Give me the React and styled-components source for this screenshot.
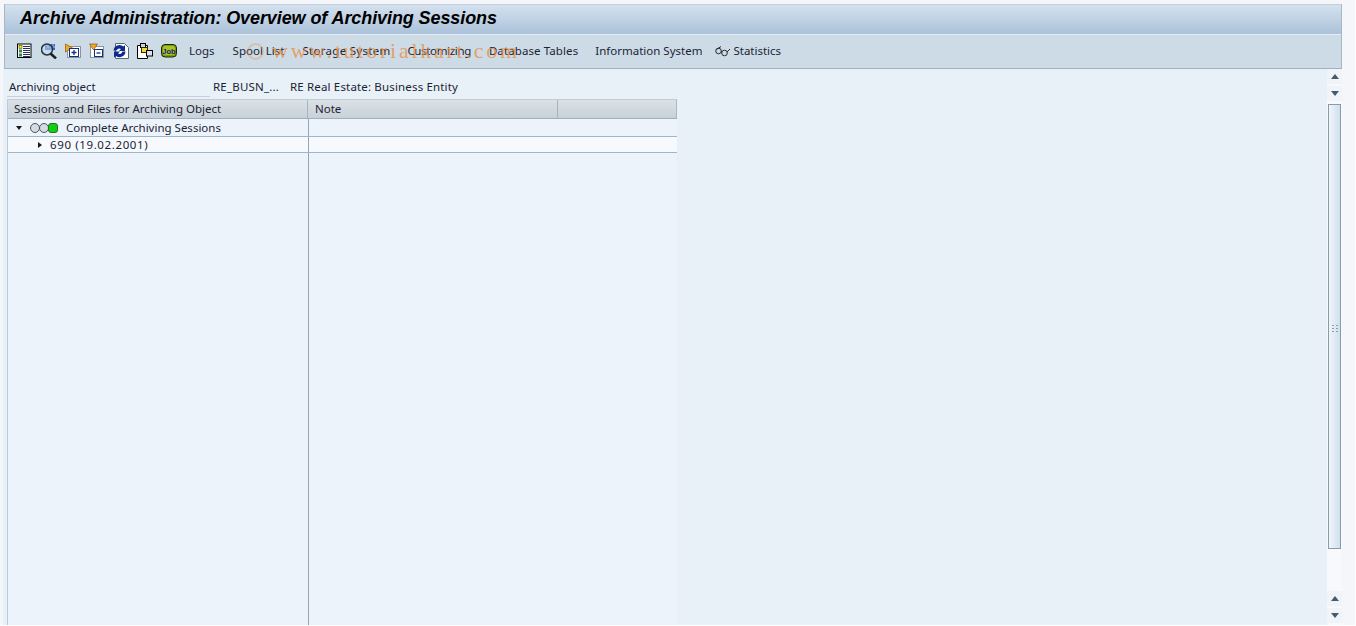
import React from "react";
import styled, { createGlobalStyle } from "styled-components";

const GlobalStyle = createGlobalStyle`
  html, body {
    margin: 0;
    padding: 0;
    background: #fff;
    overflow: hidden;
  }
  body {
    font-family: "Noto Sans", "Liberation Sans", sans-serif;
    font-size: 11.5px;
    color: #1c2433;
  }
`;

const Page = styled.div`
  position: relative;
  width: 1355px;
  height: 625px;
  box-sizing: border-box;
  padding: 4px 13px 0 3px;
  display: flex;
  flex-direction: column;
  overflow: hidden;
  background: #f5f6f9;
`;

const Header = styled.div`
  border: 1px solid #a9b6c6;
  border-bottom: 1px solid #9fb0c4;
  border-top-color: #c5cfdb;
  margin-left: 1px;
`;

const TitleBar = styled.div`
  height: 30px;
  box-sizing: border-box;
  padding: 0 0 2px 15px;
  display: flex;
  align-items: center;
  background: linear-gradient(#d4e1ee, #abc2da);
  border-bottom: 1px solid #e6edf4;
`;

const Title = styled.h1`
  margin: 0;
  font-family: "Liberation Sans", Arial, sans-serif;
  font-size: 18px;
  font-weight: bold;
  font-style: italic;
  color: #000;
  letter-spacing: -0.09px;
`;

const Toolbar = styled.div`
  height: 33px;
  box-sizing: border-box;
  padding: 0 0 2px 12px;
  display: flex;
  align-items: center;
  background: #cddbe7;
`;

const IconButton = styled.span`
  width: 16px;
  height: 16px;
  margin-right: 8px;
  display: inline-flex;
`;

const TextButton = styled.span`
  margin-left: ${(p) => p.$gap}px;
  letter-spacing: ${(p) => p.$spacing || 0}px;
  white-space: nowrap;
  display: inline-flex;
  align-items: center;
  gap: 2px;
`;

const Body = styled.div`
  flex: 1;
  display: flex;
  background: #e8f0f8;
  min-height: 0;
`;

const Content = styled.div`
  flex: 1;
  padding: 9px 0 0 4px;
  display: flex;
  flex-direction: column;
  min-height: 0;
`;

const FieldRow = styled.div`
  height: 21px;
  display: flex;
  align-items: flex-start;
  line-height: 18px;
`;

const FieldLabel = styled.span`
  width: 201px;
  padding-left: 2px;
  height: 18px;
  border-bottom: 1px solid #c5d0dc;
`;

const FieldValue = styled.span`
  width: 77px;
  margin-left: 3px;
  letter-spacing: 0.2px;
`;

const FieldText = styled.span`
  letter-spacing: 0.16px;
`;

const TreeTable = styled.div`
  flex: 1;
  width: 669px;
  display: flex;
  flex-direction: column;
  background: #ecf3fb;
  border-left: 1px solid #bccbdb;
  min-height: 0;
`;

const Columns = styled.div`
  display: grid;
  grid-template-columns: 300px 250px 118px;
  height: 20px;
  box-sizing: border-box;
  background: linear-gradient(#dbe1e6, #c8d1d9);
  border-top: 1px solid #c2ccd6;
  border-bottom: 1px solid #9fafbf;
  border-right: 1px solid #a9b6c6;
`;

const ColumnHead = styled.div`
  padding-left: ${(p) => p.$pad || 6}px;
  line-height: 18px;
  border-right: ${(p) => (p.$last ? "none" : "1px solid #a5b3c2")};
`;

const Row = styled.div`
  display: grid;
  grid-template-columns: 301px 1fr;
  height: ${(p) => p.$height}px;
  box-sizing: border-box;
  background: ${(p) => p.$bg};
  border-bottom: 1px solid #9fb6ca;
`;

const TreeCell = styled.div`
  display: flex;
  align-items: center;
  padding-left: ${(p) => p.$indent}px;
  border-right: 1px solid #93a5b8;
  white-space: nowrap;
`;

const SessionLabel = styled.span`
  letter-spacing: 0.62px;
`;

const EmptyCell = styled.div``;

const Filler = styled.div`
  flex: 1;
  display: grid;
  grid-template-columns: 301px 1fr;
`;

const Arrow = styled.span`
  width: 0;
  height: 0;
  border-style: solid;
  ${(p) =>
    p.$open
      ? "border-width: 4px 3.5px 0 3.5px; border-color: #1a1a1a transparent transparent;"
      : "border-width: 3.5px 0 3.5px 4px; border-color: transparent transparent transparent #1a1a1a; margin-right: 8px;"}
`;

const Lights = styled.span`
  display: inline-flex;
  margin: 0 8px 0 8px;
`;

const Light = styled.span`
  width: 10px;
  height: 10px;
  box-sizing: border-box;
  border-radius: ${(p) => (p.$on ? "3px" : "50%")};
  border: 1px solid ${(p) => (p.$on ? "#2d6b2d" : "#4a545e")};
  background: ${(p) => (p.$on ? "#10d010" : "#d4dbe2")};
  margin-left: ${(p) => (p.$first ? 0 : -1)}px;
`;

const Scrollbar = styled.div`
  width: 15px;
  margin-left: 1px;
  display: flex;
  flex-direction: column;
  background: #f7f9fc;
`;

const ScrollButton = styled.div`
  height: 15px;
  margin-bottom: 2px;
  background: #f0f4f9;
  display: flex;
  align-items: center;
  justify-content: center;
`;

const ScrollTriangle = styled.span`
  width: 0;
  height: 0;
  border-style: solid;
  ${(p) =>
    p.$up
      ? "border-width: 0 4.5px 5px 4.5px; border-color: transparent transparent #47596c;"
      : "border-width: 5px 4.5px 0 4.5px; border-color: #47596c transparent transparent;"}
`;

const ScrollThumb = styled.div`
  height: 445px;
  box-sizing: border-box;
  margin: 1px 1px 0;
  padding-top: 4px;
  border: 1px solid #8c9aa8;
  background: linear-gradient(90deg, #f0f5fa, #cfe0ee);
  display: flex;
  align-items: center;
  justify-content: center;
`;

const Grip = styled.span`
  width: 8px;
  height: 9px;
  background-image: radial-gradient(#8aa0b4 1px, transparent 1px);
  background-size: 4px 3px;
`;

const ScrollTrack = styled.div`
  flex: 1;
  background: #f7f9fc;
`;

const Watermark = styled.div`
  position: absolute;
  left: 272px;
  top: 38px;
  font-family: "Liberation Serif", serif;
  font-size: 22px;
  letter-spacing: 2.75px;
  color: rgba(232, 146, 72, 0.8);
  white-space: nowrap;
  pointer-events: none;
`;

const WatermarkRing = styled.div`
  position: absolute;
  left: 247px;
  top: 43px;
  width: 17px;
  height: 17px;
  box-sizing: border-box;
  border: 2px solid rgba(232, 146, 72, 0.35);
  border-radius: 50%;
  pointer-events: none;
`;

const DetailIcon = () => (
  <svg width="16" height="16" viewBox="0 0 16 16">
    <rect x="0.5" y="1" width="13.5" height="13.5" fill="#fff" stroke="#000" />
    <rect x="2" y="2.500" width="3" height="3" fill="#f6e000" stroke="#3a3a00" strokeWidth="0.5" />
    <rect x="2" y="6.500" width="3" height="3" fill="#2f8f4a" />
    <rect x="2" y="10.500" width="3" height="3" fill="#2f8f4a" />
    <path d="M6 3.500h7M6 5.500h7M6 7.500h7M6 9.500h7M6 11.500h7M6 13.500h7" stroke="#25305c" />
  </svg>
);

const FindIcon = () => (
  <svg width="16" height="16" viewBox="0 0 16 16">
    <rect x="4" y="1" width="10" height="6" fill="#2f66c8" />
    <path d="M5 2h2M8 2h2M11 2h2M6 4h2M9 4h2M12 4h2" stroke="#a8c4ee" />
    <circle cx="6" cy="6.500" r="5.500" fill="#c6d8ea" fillOpacity="0.55" stroke="#2a333c" strokeWidth="1.500" />
    <path d="M9.500 10.500l5.500 5" stroke="#1c2126" strokeWidth="2.500" />
  </svg>
);

const ExpandIcon = () => (
  <svg width="16" height="16" viewBox="0 0 16 16">
    <rect x="2.500" y="3.500" width="13" height="11" fill="#fff" stroke="#8a949e" />
    <path d="M0.500 1l7 4-7 4z" fill="#f5a820" stroke="#8a5a00" strokeWidth="0.700" />
    <rect x="4.500" y="5.500" width="9" height="8" fill="#fff" stroke="#14307c" />
    <path d="M6.500 9.500h5M9 7v5" stroke="#14307c" strokeWidth="1.300" />
  </svg>
);

const CollapseIcon = () => (
  <svg width="16" height="16" viewBox="0 0 16 16">
    <rect x="1.500" y="3.500" width="13" height="11" fill="#fff" stroke="#8a949e" />
    <rect x="5.500" y="6.500" width="8" height="7" fill="#fff" stroke="#14307c" />
    <path d="M7.500 10h4" stroke="#14307c" strokeWidth="1.300" />
    <path d="M0.500 1h8l-4 6z" fill="#f5a820" stroke="#8a5a00" strokeWidth="0.700" />
  </svg>
);

const RefreshIcon = () => (
  <svg width="16" height="16" viewBox="0 0 16 16">
    <path d="M2.500 0.500h9l4 4v11h-13z" fill="#fff" stroke="#5a6672" />
    <path d="M0.500 7.500a6 6 0 0 1 10-4l1.500-1.500v6h-6l2-2a3 3 0 0 0-4.500 1.500z" fill="#0b2a90" />
    <path d="M12.500 8.500a6 6 0 0 1-9.500 4.500l-2 1.500V8.500h6l-2 2a3 3 0 0 0 4.500-2z" fill="#0b2a90" />
  </svg>
);

const SessionIcon = () => (
  <svg width="16" height="16" viewBox="0 0 16 16">
    <path d="M0.500 2.500h10v13h-10z" fill="#fff" stroke="#000" />
    <rect x="3.500" y="0.500" width="5" height="4" fill="#cfd4d9" stroke="#000" />
    <rect x="4.500" y="4.500" width="6" height="5" fill="#f6d830" stroke="#2e2a08" />
    <rect x="9.500" y="7.500" width="6" height="5.500" fill="#dfe3e6" stroke="#000" />
  </svg>
);

const JobText = styled.text`
  font-family: "Liberation Sans", Arial, sans-serif;
  font-size: 7.5px;
  font-weight: bold;
  fill: #12207c;
`;

const JobIcon = () => (
  <svg width="16" height="16" viewBox="0 0 16 16">
    <rect x="0.500" y="1.500" width="15" height="12.500" rx="3.500" fill="#7e9a0c" stroke="#1c2408" />
    <rect x="2" y="3" width="12" height="9" rx="2" fill="#a8c420" />
    <JobText x="8" y="10.500" textAnchor="middle">Job</JobText>
  </svg>
);

const GlassesIcon = () => (
  <svg width="16" height="12" viewBox="0 0 16 12">
    <circle cx="3.500" cy="6" r="2.800" fill="none" stroke="#2a2a2a" />
    <circle cx="9.500" cy="8" r="2.800" fill="none" stroke="#2a2a2a" />
    <path d="M6 1.500L1.500 4.500M12 7l3-3M6 6.500l1 .5" fill="none" stroke="#2a2a2a" />
  </svg>
);

const toolIcons = [DetailIcon, FindIcon, ExpandIcon, CollapseIcon, RefreshIcon, SessionIcon, JobIcon];

const toolButtons = [
  { label: "Logs", gap: 4 },
  { label: "Spool List", gap: 18 },
  { label: "Storage System", gap: 18, spacing: 0.28 },
  { label: "Customizing", gap: 17, spacing: -0.35 },
  { label: "Database Tables", gap: 18, spacing: 0.1 },
  { label: "Information System", gap: 17 },
  { label: "Statistics", gap: 13, icon: true },
];

const App = () => {
  return (
    <>
      <GlobalStyle />
      <Page>
        <Header>
          <TitleBar>
            <Title>Archive Administration: Overview of Archiving Sessions</Title>
          </TitleBar>
          <Toolbar>
            {toolIcons.map((Icon, i) => (
              <IconButton key={i}>
                <Icon />
              </IconButton>
            ))}
            {toolButtons.map((b) => (
              <TextButton key={b.label} $gap={b.gap} $spacing={b.spacing}>
                {b.icon && <GlassesIcon />}
                {b.label}
              </TextButton>
            ))}
          </Toolbar>
        </Header>
        <Body>
          <Content>
            <FieldRow>
              <FieldLabel>Archiving object</FieldLabel>
              <FieldValue>RE_BUSN_...</FieldValue>
              <FieldText>RE Real Estate: Business Entity</FieldText>
            </FieldRow>
            <TreeTable>
              <Columns>
                <ColumnHead>Sessions and Files for Archiving Object</ColumnHead>
                <ColumnHead $pad={7}>Note</ColumnHead>
                <ColumnHead $last />
              </Columns>
              <Row $height={18} $bg="#ecf3fb">
                <TreeCell $indent={8}>
                  <Arrow $open />
                  <Lights>
                    <Light $first />
                    <Light />
                    <Light $on />
                  </Lights>
                  Complete Archiving Sessions
                </TreeCell>
                <EmptyCell />
              </Row>
              <Row $height={16} $bg="#f6faff">
                <TreeCell $indent={30}>
                  <Arrow />
                  <SessionLabel>690 (19.02.2001)</SessionLabel>
                </TreeCell>
                <EmptyCell />
              </Row>
              <Filler>
                <TreeCell $indent={0} />
                <EmptyCell />
              </Filler>
            </TreeTable>
          </Content>
          <Scrollbar>
            <ScrollButton>
              <ScrollTriangle $up />
            </ScrollButton>
            <ScrollButton>
              <ScrollTriangle />
            </ScrollButton>
            <ScrollThumb>
              <Grip />
            </ScrollThumb>
            <ScrollTrack />
            <ScrollButton>
              <ScrollTriangle $up />
            </ScrollButton>
            <ScrollButton>
              <ScrollTriangle />
            </ScrollButton>
          </Scrollbar>
        </Body>
        <WatermarkRing />
        <Watermark>www.tutorialkart.com</Watermark>
      </Page>
    </>
  );
};

export default App;
